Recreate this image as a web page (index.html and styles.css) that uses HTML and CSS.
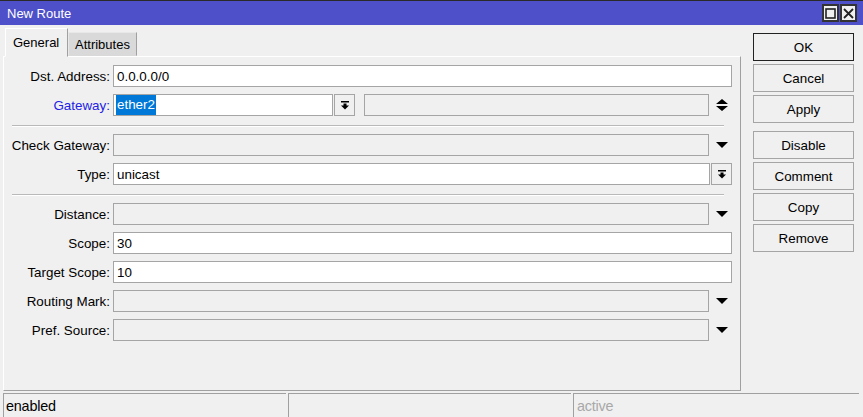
FILE: index.html
```html
<!DOCTYPE html>
<html>
<head>
<meta charset="utf-8">
<title>New Route</title>
<link rel="stylesheet" href="styles.css">
</head>
<body>
<div class="window">
  <div class="titlebar">
    <span class="title">New Route</span>
    <div class="tbtns">
      <span class="tbtn"><svg width="11" height="11" viewBox="0 0 11 11"><rect x="1" y="1" width="9" height="9" fill="none" stroke="#222" stroke-width="1.6"/></svg></span>
      <span class="tbtn"><svg width="11" height="11" viewBox="0 0 11 11"><path d="M1 1L10 10M10 1L1 10" stroke="#222" stroke-width="1.8"/></svg></span>
    </div>
  </div>
  <div class="main">
    <div class="left">
      <div class="tabs">
        <div class="tab active">General</div>
        <div class="tab">Attributes</div>
      </div>
      <div class="panel">
        <div class="row">
          <span class="label">Dst. Address:</span>
          <div class="field edit">0.0.0.0/0</div>
        </div>
        <div class="row">
          <span class="label blue">Gateway:</span>
          <div class="field edit gw"><span class="sel">ether2</span></div>
          <span class="dbtn"><svg width="8" height="9" viewBox="0 0 8 9"><path d="M0 0h8v1.5H0zM2.5 2.5h3v2h-3zM0 4.5h8L4 8.6z" fill="#000"/></svg></span>
          <div class="field off gw2"></div>
          <span class="arrow"><svg width="12" height="12" viewBox="0 0 12 12"><path d="M6 0L12 5H0zM0 7h12L6 12z" fill="#000"/></svg></span>
        </div>
        <div class="sep"></div>
        <div class="row">
          <span class="label">Check Gateway:</span>
          <div class="field off"></div>
          <span class="arrow"><svg width="12" height="6" viewBox="0 0 12 6"><path d="M0 0h12L6 6z" fill="#000"/></svg></span>
        </div>
        <div class="row">
          <span class="label">Type:</span>
          <div class="field edit">unicast</div>
          <span class="dbtn"><svg width="8" height="9" viewBox="0 0 8 9"><path d="M0 0h8v1.5H0zM2.5 2.5h3v2h-3zM0 4.5h8L4 8.6z" fill="#000"/></svg></span>
        </div>
        <div class="sep"></div>
        <div class="row">
          <span class="label">Distance:</span>
          <div class="field off"></div>
          <span class="arrow"><svg width="12" height="6" viewBox="0 0 12 6"><path d="M0 0h12L6 6z" fill="#000"/></svg></span>
        </div>
        <div class="row">
          <span class="label">Scope:</span>
          <div class="field edit">30</div>
        </div>
        <div class="row">
          <span class="label">Target Scope:</span>
          <div class="field edit">10</div>
        </div>
        <div class="row">
          <span class="label">Routing Mark:</span>
          <div class="field off"></div>
          <span class="arrow"><svg width="12" height="6" viewBox="0 0 12 6"><path d="M0 0h12L6 6z" fill="#000"/></svg></span>
        </div>
        <div class="row">
          <span class="label">Pref. Source:</span>
          <div class="field off"></div>
          <span class="arrow"><svg width="12" height="6" viewBox="0 0 12 6"><path d="M0 0h12L6 6z" fill="#000"/></svg></span>
        </div>
      </div>
    </div>
    <div class="buttons">
      <div class="btn default">OK</div>
      <div class="btn">Cancel</div>
      <div class="btn group-end">Apply</div>
      <div class="btn">Disable</div>
      <div class="btn">Comment</div>
      <div class="btn">Copy</div>
      <div class="btn">Remove</div>
    </div>
  </div>
  <div class="status">
    <div class="seg">enabled</div>
    <div class="seg"></div>
    <div class="seg muted">active</div>
  </div>
</div>
</body>
</html>
```
FILE: styles.css
```css
body {
  margin: 0;
  background: #f0f0f0;
  font: 13.4px "Liberation Sans", Arial, sans-serif;
  color: #000;
}
.window {
  width: 863px;
  height: 417px;
  display: flex;
  flex-direction: column;
  overflow: hidden;
}
.titlebar {
  height: 25px;
  box-sizing: border-box;
  border-top: 1px solid #2a2a2a;
  background: #4e50c9;
  display: flex;
  align-items: center;
  padding: 0 6px 0 7px;
  font-size: 13px;
}
.title {
  color: #fff;
  flex: 1;
}
.tbtns {
  display: flex;
  gap: 1px;
  align-self: flex-start;
  margin-top: 3px;
}
.tbtn {
  width: 17px;
  height: 18px;
  box-sizing: border-box;
  border: 2px solid #333;
  background: #f0f0f0;
  display: flex;
  align-items: center;
  justify-content: center;
}
.main {
  display: flex;
  height: 366px;
}
.left {
  margin-left: 3px;
  width: 738px;
  display: flex;
  flex-direction: column;
}
.tabs {
  display: flex;
  align-items: flex-end;
  height: 31px;
  padding-left: 2px;
  font-size: 13px;
}
.tab {
  box-sizing: border-box;
  height: 24px;
  width: 69px;
  background: #d9d9d9;
  border: 1px solid;
  border-color: #e8e8e8 #a0a0a0 transparent #e8e8e8;
  padding-left: 6px;
  display: flex;
  align-items: center;
}
.tab.active {
  height: 29px;
  width: 63px;
  margin-bottom: -1px;
  background: #f0f0f0;
  border-color: #fff #a0a0a0 transparent #fff;
  padding-left: 7px;
  z-index: 1;
}
.panel {
  height: 335px;
  box-sizing: border-box;
  border: 1px solid;
  border-color: #fff #a0a0a0 #a0a0a0 #fff;
  padding: 8px 8px 0 0;
  display: flex;
  flex-direction: column;
}
.row {
  display: flex;
  align-items: center;
  height: 22px;
  flex: none;
  margin-bottom: 7px;
}
.label {
  width: 106px;
  text-align: right;
  margin-right: 3px;
  white-space: nowrap;
}
.label.blue {
  color: #2222e6;
}
.field {
  flex: 1;
  height: 22px;
  box-sizing: border-box;
  border: 1px solid #a5a5a5;
  padding-left: 3px;
  display: flex;
  align-items: center;
  white-space: nowrap;
}
.field.edit {
  background: #fff;
}
.field.off {
  background: #f0f0f0;
}
.field.gw {
  flex: none;
  width: 220px;
  padding-left: 2px;
}
.sel {
  background: #0078d7;
  color: #fff;
  padding: 2px 1px 3px 1px;
}
.field.gw2 {
  margin-left: 9px;
}
.dbtn {
  width: 21px;
  height: 22px;
  box-sizing: border-box;
  border: 1px solid #a5a5a5;
  margin-left: 1px;
  display: flex;
  align-items: center;
  justify-content: center;
  background: #f0f0f0;
}
.arrow {
  width: 23px;
  height: 22px;
  display: flex;
  align-items: center;
  justify-content: center;
  padding-left: 3px;
  box-sizing: border-box;
}
.sep {
  flex: none;
  margin: 2px 8px 7px 8px;
  border-top: 1px solid #b9b9b9;
  border-bottom: 1px solid #fff;
}
.buttons {
  margin-left: 12px;
  padding-top: 8px;
  width: 101px;
  display: flex;
  flex-direction: column;
}
.btn {
  height: 28px;
  box-sizing: border-box;
  border: 1px solid #a5a5a5;
  background: #f0f0f0;
  display: flex;
  align-items: center;
  justify-content: center;
  margin-bottom: 3px;
}
.btn.default {
  border-color: #222;
}
.btn.group-end {
  margin-bottom: 8px;
}
.status {
  display: flex;
  gap: 2px;
  margin-top: 2px;
  height: 24px;
  padding-left: 3px;
}
.seg {
  width: 283px;
  box-sizing: border-box;
  border-top: 1px solid #a0a0a0;
  border-left: 1px solid #a0a0a0;
  padding-left: 2px;
  display: flex;
  align-items: center;
  font-size: 14.4px;
  letter-spacing: -0.2px;
}
.seg:last-child {
  width: 286px;
}
.seg.muted {
  color: #a8a8a8;
  padding-left: 3px;
}
```
